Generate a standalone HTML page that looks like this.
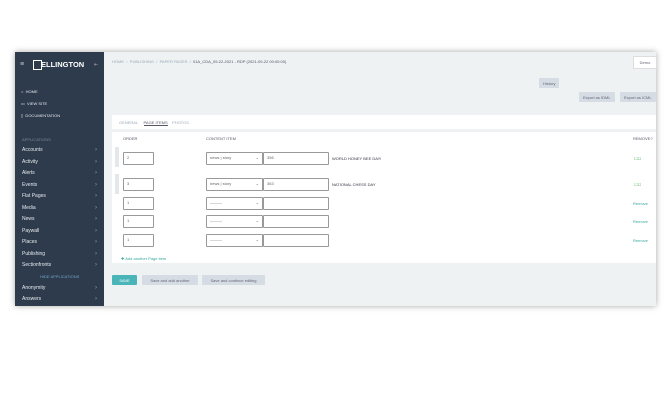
<!DOCTYPE html><html><head><style>
body{margin:0;width:672px;height:410px;background:#fff;font-family:"Liberation Sans",sans-serif;position:relative;overflow:hidden}
.a{position:absolute}
.win{left:15px;top:52px;width:641px;height:254px;background:#eef2f3;box-shadow:0 0 6px rgba(0,0,0,.35)}
.side{left:15px;top:52px;width:89px;height:254px;background:#2e3b4c}
.s{position:absolute;left:22px;font-size:5px;color:#e6eaef}
.ar{position:absolute;left:95px;font-size:6px;color:#8aa}
.t{font-size:4px;color:#889}
.inp{position:absolute;height:10px;border:1px solid #999;background:#fff;border-radius:1px;font-size:4px;color:#666;box-sizing:border-box;padding:2px 3px}
.btn{position:absolute;height:10px;background:#d5dce3;font-size:4px;color:#667;box-sizing:border-box;padding:3px 4px;border-radius:1px}
</style></head><body>
<div class="a win"></div>
<div class="a side"></div>
<div class="a" style="left:20px;top:61px;color:#ccc;font-size:7px">≡</div>
<div class="a" style="left:33px;top:60px;width:7px;height:8px;border:1px solid #fff"></div>
<div class="a" style="left:41px;top:60px;color:#fff;font-size:7.5px;font-weight:bold">ELLINGTON</div>
<div class="a" style="left:94px;top:62px;color:#aaa;font-size:5px">⇤</div>
<div class="s" style="left:21px;top:89px;font-size:4px">○ &nbsp;HOME</div>
<div class="s" style="left:21px;top:101px;font-size:4px">▭ &nbsp;VIEW SITE</div>
<div class="s" style="left:21px;top:113px;font-size:4px">▯ &nbsp;DOCUMENTATION</div>
<div class="s" style="top:137px;font-size:4px;color:#7a8796">APPLICATIONS</div>
<div class="s" style="top:147px">Accounts</div><div class="ar" style="top:147px">›</div>
<div class="s" style="top:159px">Activity</div><div class="ar" style="top:159px">›</div>
<div class="s" style="top:170px">Alerts</div><div class="ar" style="top:170px">›</div>
<div class="s" style="top:182px">Events</div><div class="ar" style="top:182px">›</div>
<div class="s" style="top:193px">Flat Pages</div><div class="ar" style="top:193px">›</div>
<div class="s" style="top:205px">Media</div><div class="ar" style="top:205px">›</div>
<div class="s" style="top:216px">News</div><div class="ar" style="top:216px">›</div>
<div class="s" style="top:228px">Paywall</div><div class="ar" style="top:228px">›</div>
<div class="s" style="top:239px">Places</div><div class="ar" style="top:239px">›</div>
<div class="s" style="top:251px">Publishing</div><div class="ar" style="top:251px">›</div>
<div class="s" style="top:262px">Sectionfronts</div><div class="ar" style="top:262px">›</div>
<div class="s" style="left:40px;top:274px;font-size:4px;color:#6fa9c9">HIDE APPLICATIONS</div>
<div class="s" style="top:285px">Anonymity</div><div class="ar" style="top:285px">›</div>
<div class="s" style="top:296px">Answers</div><div class="ar" style="top:296px">›</div>
<div class="a t" style="left:112px;top:59px;color:#9ab">HOME &nbsp;› &nbsp;PUBLISHING &nbsp;/ &nbsp;PAPER PAGES &nbsp;/ &nbsp;<span style="color:#556">01A_CDA_09-22-2021 - RDP (2021-09-22 00:00:00)</span></div>
<div class="a" style="left:633px;top:56px;width:22px;height:11px;background:#fff;border:1px solid #ddd;font-size:4px;color:#667;text-align:center;line-height:11px">Demo</div>
<div class="btn" style="left:539px;top:78px">History</div>
<div class="btn" style="left:579px;top:92px">Export as IDML</div>
<div class="btn" style="left:620px;top:92px">Export as ICML</div>
<div class="a" style="left:112px;top:115px;width:544px;height:14px;background:#fff"></div>
<div class="a t" style="left:119px;top:120px;color:#9ab">GENERAL &nbsp;&nbsp;&nbsp; <span style="color:#556;border-bottom:1px solid #556">PAGE ITEMS</span> &nbsp;&nbsp;&nbsp;PHOTOS</div>
<div class="a" style="left:112px;top:132px;width:544px;height:131px;background:#fff"></div>
<div class="a t" style="left:123px;top:136px;color:#556">ORDER</div>
<div class="a t" style="left:206px;top:136px;color:#556">CONTENT ITEM</div>
<div class="a t" style="left:633px;top:136px;color:#556">REMOVE?</div>
<div class="a" style="left:115px;top:147px;width:4px;height:20px;background:#e4e8ea"></div>
<div class="a" style="left:115px;top:174px;width:4px;height:20px;background:#e4e8ea"></div>
<div class="inp" style="left:123px;top:152px;width:31px;height:13px">2</div>
<div class="inp" style="left:206px;top:152px;width:57px;height:13px">news | story <span style="float:right">⌄</span></div>
<div class="inp" style="left:263px;top:152px;width:66px;height:13px">356</div>
<div class="a t" style="left:332px;top:156px;color:#334">WORLD HONEY BEE DAY!</div>
<div class="a t" style="left:634px;top:156px;color:#4a4">☐☐</div>
<div class="inp" style="left:123px;top:178px;width:31px;height:13px">3</div>
<div class="inp" style="left:206px;top:178px;width:57px;height:13px">news | story <span style="float:right">⌄</span></div>
<div class="inp" style="left:263px;top:178px;width:66px;height:13px">363</div>
<div class="a t" style="left:332px;top:182px;color:#334">NATIONAL CHESS DAY</div>
<div class="a t" style="left:634px;top:182px;color:#4a4">☐☐</div>
<div class="inp" style="left:123px;top:197px;width:31px;height:13px">1</div>
<div class="inp" style="left:206px;top:197px;width:57px;height:13px">——— <span style="float:right">⌄</span></div>
<div class="inp" style="left:263px;top:197px;width:66px;height:13px"></div>
<div class="a t" style="left:633px;top:201px;color:#3a9">Remove</div>
<div class="inp" style="left:123px;top:215px;width:31px;height:13px">1</div>
<div class="inp" style="left:206px;top:215px;width:57px;height:13px">——— <span style="float:right">⌄</span></div>
<div class="inp" style="left:263px;top:215px;width:66px;height:13px"></div>
<div class="a t" style="left:633px;top:219px;color:#3a9">Remove</div>
<div class="inp" style="left:123px;top:234px;width:31px;height:13px">1</div>
<div class="inp" style="left:206px;top:234px;width:57px;height:13px">——— <span style="float:right">⌄</span></div>
<div class="inp" style="left:263px;top:234px;width:66px;height:13px"></div>
<div class="a t" style="left:633px;top:238px;color:#3a9">Remove</div>
<div class="a t" style="left:121px;top:256px;color:#3a9">✚ Add another Page item</div>
<div class="btn" style="left:112px;top:275px;width:25px;background:#4ab5b8;color:#fff;text-align:center">SAVE</div>
<div class="btn" style="left:142px;top:275px;width:56px;text-align:center">Save and add another</div>
<div class="btn" style="left:202px;top:275px;width:63px;text-align:center">Save and continue editing</div>
</body></html>
